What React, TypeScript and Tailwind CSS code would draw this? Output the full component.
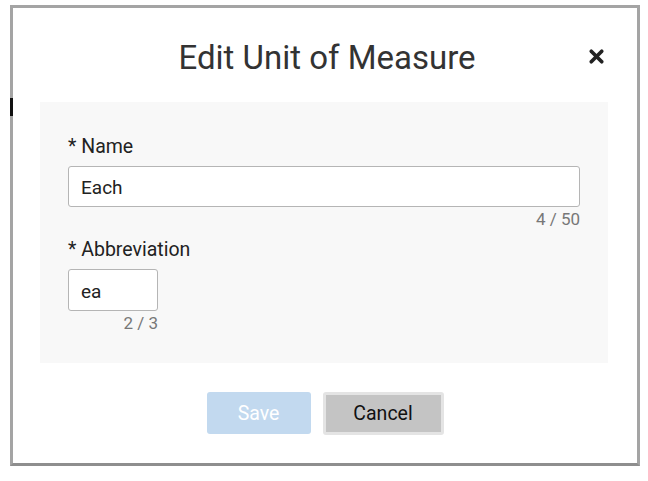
import { X } from 'lucide-react';

export default function App() {
  return (
    <div className="w-[648px] h-[481px] bg-white pt-[5px] pl-[10px]" style={{ fontFamily: 'Roboto, "Liberation Sans", sans-serif' }}>
      <div className="relative w-[630px] h-[461px] border-[3px] border-[#a4a4a4] border-b-[#8e8e8e] bg-white flex flex-col">
        {/* bits of the page behind, peeking over the frame */}
        <div className="absolute left-[-3px] top-[90px] w-[3px] h-[18px] bg-[#111]" />

        {/* Header */}
        <div className="relative h-[94px] flex items-center justify-center">
          <h2 className="text-[33px] text-[#333] font-normal mt-[5px] ml-[4px]">Edit Unit of Measure</h2>
          <button className="absolute right-[30px] top-[38px] text-[#222]">
            <X size={21} strokeWidth={4.2} />
          </button>
        </div>

        {/* Form body */}
        <div className="mx-[27px] w-[568px] h-[261px] bg-[#f8f8f8] px-[28px] pt-[34px]">
          <label className="block text-[19.5px] text-[#222] leading-[22px]">* Name</label>
          <div className="mt-[8px] h-[41px] w-full border border-[#b5b5b5] rounded-[3px] bg-white flex items-center px-[12px] pt-[3px] text-[19px] text-[#222]">
            Each
          </div>
          <div className="text-right text-[17px] text-[#777] leading-[18px] mt-[3px]">4 / 50</div>

          <label className="block text-[19.5px] text-[#222] leading-[22px] mt-[11px]">* Abbreviation</label>
          <div className="w-[90px]">
            <div className="mt-[8px] h-[42px] w-full border border-[#b5b5b5] rounded-[3px] bg-white flex items-center px-[12px] pt-[4px] text-[19px] text-[#222]">
              ea
            </div>
            <div className="text-right text-[17px] text-[#777] leading-[18px] mt-[3px]">2 / 3</div>
          </div>
        </div>

        {/* Footer */}
        <div className="flex justify-center gap-[12px] mt-[29px]">
          <button className="w-[104px] h-[42px] rounded-[3px] bg-[#c2d9ef] text-white text-[19.5px] pt-[1px]">Save</button>
          <button className="w-[121px] h-[43px] rounded-[3px] border-[3px] border-[#e4e4e4] bg-[#c4c4c4] text-[#111] text-[19.5px] pt-[1px]">Cancel</button>
        </div>
      </div>
    </div>
  );
}
